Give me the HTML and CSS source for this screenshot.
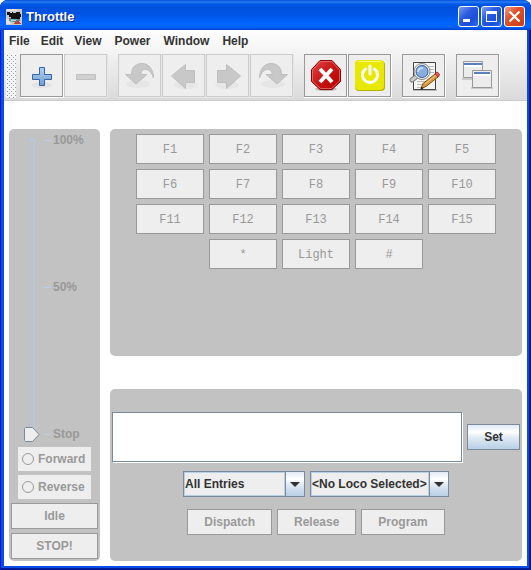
FILE: index.html
```
<!DOCTYPE html>
<html lang="en">
<head>
<meta charset="utf-8">
<title>Throttle</title>
<link rel="stylesheet" href="styles.css">
</head>
<body>
<div class="window">
  <header class="titlebar">
    <svg class="app-icon" viewBox="0 0 16 16" shape-rendering="crispEdges" aria-hidden="true">
      <path fill="#c8c8c8" d="M0 0h16v16H0z"/>
      <path fill="#e8dfe2" d="M1 0h10v2H1zM0 10h5v5H0z"/>
      <path fill="#111" d="M1 3h3v1h2V3h1v1h3V3h4v2h1v3h-1v2h-2v1h-2v-1H5V8H3V6H1z"/>
      <path fill="#777" d="M3 9h2v3H3zM10 10h4v2h-4zM5 12h6v1H5z"/>
      <path fill="#3fc4c4" d="M6 10h5v1H6zM4 12h3v1H4z"/>
      <path fill="#b04444" d="M9 13h2v-1h2v1h1v1h1v1H8v-1h1z"/>
    </svg>
    <h1 class="title">Throttle</h1>
    <div class="window-controls">
      <button class="win-button" type="button" aria-label="Minimize"><svg viewBox="0 0 19 19" shape-rendering="crispEdges"><path fill="#fff" d="M4 12h7v3H4z"/></svg></button>
      <button class="win-button" type="button" aria-label="Maximize"><svg viewBox="0 0 19 19" shape-rendering="crispEdges"><path fill="#fff" fill-rule="evenodd" d="M4 4h11v11H4zM5 7v7h9V7z"/></svg></button>
      <button class="win-button close" type="button" aria-label="Close"><svg viewBox="0 0 19 19"><path stroke="#fff" stroke-width="2.200" d="M4.500 4.500l10 10M14.500 4.500l-10 10"/></svg></button>
    </div>
  </header>

  <div class="client">
    <div class="chrome">
      <nav class="menubar">
        <div class="menus">
          <button type="button">File</button>
          <button type="button">Edit</button>
          <button type="button">View</button>
        </div>
        <div class="menus wide">
          <button type="button">Power</button>
          <button type="button">Window</button>
          <button type="button">Help</button>
        </div>
      </nav>
      <div class="toolbar">
        <span class="grip"></span>
        <div class="tool-groups">
          <div class="tool-group">
            <button class="tool" type="button" aria-label="Add">
              <svg viewBox="0 0 41 41"><defs><linearGradient id="plus" x2="0" y2="1"><stop stop-color="#b4cfee"/><stop offset="1" stop-color="#6f9fd2"/></linearGradient></defs><ellipse cx="21" cy="30" rx="10" ry="3" fill="#e2e2e2"/><path fill="url(#plus)" stroke="#3465a4" d="M18.500 12.500h5v7h7v5h-7v6h-5v-6h-7v-5h7z"/></svg>
            </button>
            <button class="tool" type="button" aria-label="Remove" disabled>
              <svg viewBox="0 0 41 41"><path fill="#d0d0d0" stroke="#c0c0c0" d="M11.500 19.500h19v5h-19z"/></svg>
            </button>
          </div>
          <div class="tool-group">
            <button class="tool" type="button" aria-label="Undo" disabled>
              <svg viewBox="0 0 41 41"><ellipse cx="19" cy="29" rx="12" ry="4" fill="#e6e6e6"/><path fill="#c8c8c8" stroke="#bfbfbf" d="M6.500 19.500h6C12.500 12 17 8.500 23 8.500c7 0 11.500 6 11.500 14.500-2-6-5-8.500-8-8.500-3.500 0-4.500 2-4.500 5h6L17 29z"/></svg>
            </button>
            <button class="tool" type="button" aria-label="Back" disabled>
              <svg viewBox="0 0 41 41"><ellipse cx="22" cy="30" rx="12" ry="4" fill="#e6e6e6"/><path fill="#c8c8c8" stroke="#bfbfbf" d="M8.500 21L22.500 9.500v6h9v12h-9v6z"/></svg>
            </button>
            <button class="tool" type="button" aria-label="Forward one" disabled>
              <svg viewBox="0 0 41 41"><ellipse cx="20" cy="30" rx="12" ry="4" fill="#e6e6e6"/><path fill="#c8c8c8" stroke="#bfbfbf" d="M33.500 21L19.500 9.500v6h-9v12h9v6z"/></svg>
            </button>
            <button class="tool" type="button" aria-label="Redo" disabled>
              <svg viewBox="0 0 41 41"><ellipse cx="22" cy="29" rx="12" ry="4" fill="#e6e6e6"/><path fill="#c8c8c8" stroke="#bfbfbf" d="M36.500 19.500h-6C30.500 12 26 8.500 20 8.500c-7 0-11.500 6-11.500 14.500 2-6 5-8.500 8-8.500 3.500 0 4.500 2 4.500 5h-6L26 29z"/></svg>
            </button>
          </div>
          <div class="tool-group">
            <button class="tool" type="button" aria-label="Stop">
              <svg viewBox="0 0 41 41"><defs><linearGradient id="stop" x2="1" y2="1"><stop stop-color="#e04848"/><stop offset=".5" stop-color="#c81414"/><stop offset="1" stop-color="#b80000"/></linearGradient></defs><ellipse cx="21" cy="34" rx="11" ry="2" fill="#bbb"/><path fill="url(#stop)" stroke="#8f0000" d="M15 5.500h12l8.500 9v12L27 34.500H15l-8.500-8v-12z"/><path fill="none" stroke="#e88080" stroke-opacity=".7" d="M15.500 6.500h11l8 8.500v11l-8 7.500h-11l-8-7.500V15z"/><path stroke="#fff" stroke-width="4" d="M15 14l12 13M27 14L15 27"/></svg>
            </button>
            <button class="tool" type="button" aria-label="Power">
              <svg viewBox="0 0 41 41"><rect x="6" y="6" width="30" height="30" rx="4" fill="#b4b400"/><rect x="6" y="5" width="29" height="30" rx="4" fill="#e8e800"/><path stroke="#f8f870" d="M9 6.500h23"/><path fill="none" stroke="#fff" stroke-width="3" stroke-linecap="round" d="M16.500 14a7.500 7.500 0 1 0 9 0M21 11v8"/></svg>
            </button>
          </div>
          <div class="tool-group">
            <button class="tool" type="button" aria-label="Edit roster">
              <svg viewBox="0 0 41 41"><path fill="#bbb" d="M10 34h24v2H10z"/><path fill="#f5f5f5" stroke="#444" d="M10.500 7.500h22v27h-22z"/><path stroke="#bbb" d="M25 11.500h6M26 14.500h5M27 17.500h4M14 26.500h10M14 29.500h6M14 32.500h5"/><path stroke="#777" stroke-width="5" stroke-linecap="round" d="M9 25l5-4"/><path stroke="#ccc" stroke-width="3" stroke-linecap="round" d="M9 25l5-4"/><circle cx="19" cy="16.500" r="7" fill="#729fcf" stroke="#eee" stroke-width="2"/><circle cx="19" cy="16.500" r="8" fill="none" stroke="#888"/><circle cx="19" cy="16.500" r="6" fill="#88aede" stroke="#3465a4"/><path fill="none" stroke="#c5daf4" stroke-width="2" d="M15 17c0-3 2-4 5-4"/><path fill="#dc9a42" stroke="#81500c" d="M18 33.500l2-5 12-9.500 3 3-12 9.500z"/><path stroke="#f4c98b" d="M22 29l11-9"/><path fill="#e06060" stroke="#a33" d="M32 18.500l2-1.500 2.500 2-1 3z"/><path fill="#222" d="M17.500 34.500l1-3 2 2z"/></svg>
            </button>
          </div>
          <div class="tool-group">
            <button class="tool" type="button" aria-label="Windows">
              <svg viewBox="0 0 41 41"><path fill="#ccc" d="M5 23h20v2H5zM14 32h22v2H14z"/><path fill="#ececec" stroke="#999" d="M6.500 6.500h19v16h-19z"/><path fill="#fff" d="M7 10h18v2H7z"/><path fill="#5c80b8" d="M7 8h18v2H7z"/><path fill="#ececec" stroke="#999" d="M15.500 15.500h19v17h-19z"/><path fill="#fff" d="M16 19h18v2H16z"/><path fill="#5c80b8" d="M17 17h16v2H17z"/></svg>
            </button>
          </div>
        </div>
      </div>
    </div>

    <main class="content">
      <section class="panel speed">
        <div class="slider">
          <span class="track"></span>
          <input type="range" min="0" max="100" value="0" aria-label="Speed" disabled>
          <div class="marks"><span>100%</span><span>50%</span><span>Stop</span></div>
        </div>
        <label class="direction"><input type="radio" name="direction" disabled>Forward</label>
        <label class="direction"><input type="radio" name="direction" disabled>Reverse</label>
        <button class="button" type="button" disabled>Idle</button>
        <button class="button" type="button" disabled>STOP!</button>
      </section>

      <div class="column">
        <section class="panel functions">
          <div class="keys">
            <button type="button" disabled>F1</button>
            <button type="button" disabled>F2</button>
            <button type="button" disabled>F3</button>
            <button type="button" disabled>F4</button>
            <button type="button" disabled>F5</button>
            <button type="button" disabled>F6</button>
            <button type="button" disabled>F7</button>
            <button type="button" disabled>F8</button>
            <button type="button" disabled>F9</button>
            <button type="button" disabled>F10</button>
            <button type="button" disabled>F11</button>
            <button type="button" disabled>F12</button>
            <button type="button" disabled>F13</button>
            <button type="button" disabled>F14</button>
            <button type="button" disabled>F15</button>
            <button class="second" type="button" disabled>*</button>
            <button type="button" disabled>Light</button>
            <button type="button" disabled>#</button>
          </div>
        </section>

        <section class="panel address">
          <div class="row entry">
            <input class="field" type="text" aria-label="Locomotive address">
            <button class="button set" type="button">Set</button>
          </div>
          <div class="row">
            <div class="combo group"><select aria-label="Roster group"><option>All Entries</option></select><span class="arrow"></span></div>
            <div class="combo loco"><select aria-label="Locomotive"><option>&lt;No Loco Selected&gt;</option></select><span class="arrow"></span></div>
          </div>
          <div class="row actions">
            <button class="button" type="button" disabled>Dispatch</button>
            <button class="button" type="button" disabled>Release</button>
            <button class="button" type="button" disabled>Program</button>
          </div>
        </section>
      </div>
    </main>
  </div>
</div>
</body>
</html>
```
FILE: styles.css
```
* { box-sizing: border-box; }

body {
  margin: 0;
  background: #fff;
  color: #333;
  font: bold 12px/16px "Liberation Sans", Arial, sans-serif;
}

button, input, select {
  margin: 0;
  padding: 0;
  border: 0;
  border-radius: 0;
  background: none;
  color: inherit;
  font: inherit;
}

svg { display: block; }

.window {
  display: flex;
  flex-direction: column;
  min-height: 100vh;
  padding: 0 4px 4px;
  border-radius: 8px 8px 0 0;
  background: #0a4ce6;
  box-shadow: inset 1px 0 #0019cf, inset -1px -1px #00138c, inset -2px -2px #001ea0;
}

/* Title bar */
.titlebar {
  display: flex;
  align-items: center;
  gap: 4px;
  height: 30px;
  margin: 0 -4px;
  padding: 3px 6px 0;
  border-radius: 8px 8px 0 0;
  background: linear-gradient(#0050d8 0, #2a7cf4 2px, #0058e6 4px, #0050dc 8px, #0055e5 15px, #0066ff 24px, #0062fa 27px, #0040cf 30px);
}

.app-icon { width: 16px; height: 16px; }

.title {
  flex: 1;
  margin: 0;
  color: #fff;
  font-size: 13px;
  line-height: 16px;
  text-shadow: 1px 1px #0a1883;
}

.window-controls { display: flex; gap: 2px; }

.win-button {
  width: 21px;
  height: 21px;
  border: 1px solid #fff;
  border-radius: 3px;
  background: linear-gradient(135deg, #7a9cf0, #2a5be0 40%, #1c4fd8 70%, #2f6cf4);
}

.win-button.close { background: linear-gradient(135deg, #f0a088, #e0512c 40%, #cc3a12); }

/* Menus and tool bar */
.client {
  display: flex;
  flex: 1;
  flex-direction: column;
  background: #fff;
}

.chrome {
  border-bottom: 1px solid #ccc;
  background: linear-gradient(#fff, #dadada);
}

.menubar {
  display: flex;
  gap: 13px;
  padding: 3px 5px;
}

.menus { display: flex; gap: 11px; }
.menus.wide { gap: 13px; }

.toolbar {
  display: flex;
  gap: 4px;
  padding: 2px;
}

.grip {
  width: 10px;
  background:
    url("data:image/svg+xml,%3Csvg xmlns='http://www.w3.org/2000/svg' width='4' height='4'%3E%3Cpath fill='%238a96a2' d='M1 1h1v1H1zM3 3h1v1H3z'/%3E%3C/svg%3E"),
    #f6f6f6;
}

.tool-groups { display: flex; gap: 10px; }
.tool-group { display: flex; }

.tool {
  width: 44px;
  height: 44px;
  padding: 0;
  border: solid #fff;
  border-width: 0 1px 1px 0;
  background: #eee;
  box-shadow: inset 0 0 0 1px #999;
}

.tool svg { width: 41px; height: 41px; margin: 1px; }

.tool:disabled {
  border-color: #e6e6e6;
  box-shadow: inset 0 0 0 1px #ccc;
}

/* Panels */
.content {
  display: flex;
  flex: 1;
  gap: 10px;
  padding: 28px 5px 5px;
}

.column {
  display: flex;
  flex: 1;
  flex-direction: column;
  gap: 33px;
}

.panel {
  border-radius: 5px;
  background: #c2c2c2;
}

.button {
  height: 26px;
  border: 1px solid #7a8a99;
  background: linear-gradient(#e0eaf5, #fff 30%, #e2ebf4 50%, #b8cfe5);
}

.button:disabled {
  border-color: #999;
  background: #eee;
  color: #999;
}

/* Speed and direction */
.speed {
  display: flex;
  flex: 0 0 91px;
  flex-direction: column;
  gap: 4px;
  padding: 3px 2px 2px;
}

.slider {
  display: grid;
  flex: 1;
  grid-template-columns: 16px 1fr;
  gap: 4px;
  padding: 0 0 1px 13px;
}

.track, .slider input { grid-area: 1 / 1; }

.track {
  width: 6px;
  margin: 7px 0 7px 5px;
  border: 1px solid #b0cdea;
  border-left-color: #b8c0e0;
}

.slider input {
  width: 16px;
  height: 100%;
  appearance: none;
  direction: rtl;
  writing-mode: vertical-lr;
}

.slider input::-webkit-slider-thumb {
  width: 16px;
  height: 15px;
  appearance: none;
  background: url("data:image/svg+xml,%3Csvg xmlns='http://www.w3.org/2000/svg' width='16' height='15'%3E%3Cpath fill='%23eee' stroke='%237a8a99' d='M1.500.5h7L15 7.500l-6.500 7h-7l-1-1v-12z'/%3E%3C/svg%3E");
}

.marks {
  display: flex;
  flex-direction: column;
  justify-content: space-between;
  color: #999;
}

.marks span {
  display: flex;
  align-items: center;
  gap: 2px;
}

.marks span::before {
  width: 7px;
  height: 1px;
  background: #b8cfe5;
  content: "";
}

.direction {
  display: flex;
  align-items: center;
  gap: 4px;
  height: 24px;
  margin: 0 7px;
  padding-left: 4px;
  background: #eee;
  color: #999;
}

.direction input {
  width: 12px;
  height: 12px;
  border: 1px solid #999;
  border-radius: 50%;
  appearance: none;
}

/* Function keys */
.functions {
  flex: 1;
  padding: 5px;
}

.keys {
  display: grid;
  grid-template-columns: repeat(5, 68px);
  grid-auto-rows: 30px;
  justify-content: center;
  gap: 5px;
}

.keys button {
  padding-top: 2px;
  border: 1px solid #999;
  background: #eee;
  color: #999;
  font: 12px/16px "Liberation Mono", "Courier New", monospace;
}

.keys .second { grid-column-start: 2; }

/* Address */
.address {
  display: flex;
  flex-direction: column;
  gap: 9px;
  padding: 23px 2px 26px;
}

.row {
  display: flex;
  justify-content: center;
  gap: 5px;
}

.entry { align-items: center; }

.field {
  flex: 1;
  min-width: 0;
  height: 50px;
  padding: 0 4px;
  border: 1px solid #7a8a99;
  background: #fff;
  box-shadow: 1px 1px #fff;
}

.set { width: 53px; }

.combo {
  display: flex;
  height: 26px;
  border: 1px solid #7a8a99;
}

.combo.group { width: 122px; }
.combo.loco { width: 139px; }

.combo select {
  flex: 1;
  min-width: 0;
  border: 1px solid #b8cfe5;
  background: #eee;
  appearance: none;
}

.arrow {
  display: flex;
  align-items: center;
  justify-content: center;
  width: 19px;
  border-left: 1px solid #7a8a99;
  background: linear-gradient(#e0eaf5, #fff 30%, #e2ebf4 50%, #b8cfe5);
}

.arrow::before {
  border: 5px solid transparent;
  border-top-color: #333;
  border-bottom: 0;
  content: "";
}

.actions { padding-top: 3px; }
.actions .button { padding: 0 16px; }
```
